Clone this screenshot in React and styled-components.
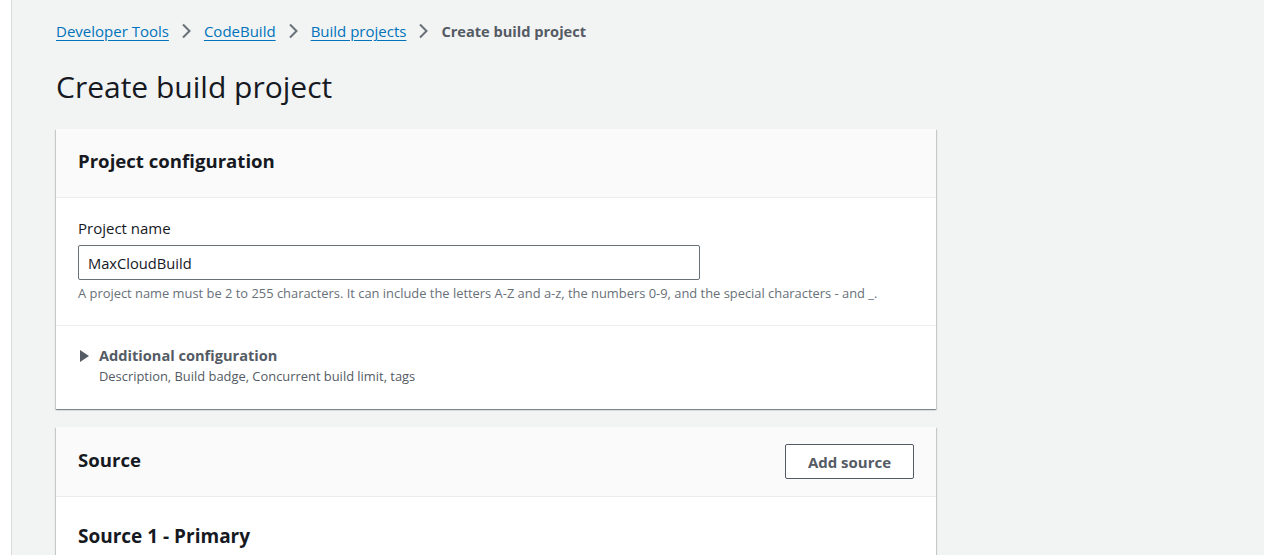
import React from "react"
import styled, { createGlobalStyle } from "styled-components"

const GlobalStyle = createGlobalStyle`
  html, body {
    margin: 0;
    padding: 0;
    background: #f2f3f3;
    font-family: "Open Sans", "Noto Sans", Arial, sans-serif;
    color: #16191f;
  }
`

const Shell = styled.div`
  display: flex;
  min-height: 555px;
`

const NavRail = styled.div`
  width: 11px;
  flex-shrink: 0;
  background: #ffffff;
  border-right: 1px solid #d5dbdb;
`

const Main = styled.main`
  flex: 1;
  padding: 19px 0 0 44px;
  max-width: 880px;
`

const Breadcrumbs = styled.nav`
  display: flex;
  align-items: center;
  height: 24px;
  font-size: 15px;
`

const Crumb = styled.a`
  color: #0073bb;
  text-decoration: underline;
  text-underline-offset: 3px;
  cursor: pointer;
`

const CurrentCrumb = styled.span`
  color: #545b64;
  font-weight: 700;
  font-size: 14.6px;
`

const Chevron = styled.svg`
  width: 10px;
  height: 16px;
  margin: 0 13px 0 12px;
  color: #687078;
`

const Title = styled.h1`
  margin: 24px 0 22px;
  font-size: 30px;
  line-height: 40px;
  font-weight: 400;
  color: #16191f;
`

const Card = styled.section`
  background: #ffffff;
  box-shadow: 0 1px 1px 0 rgba(0, 28, 36, 0.3), 1px 1px 1px 0 rgba(0, 28, 36, 0.15),
    -1px 1px 1px 0 rgba(0, 28, 36, 0.15);
  margin-bottom: 18px;
`

const CardHeader = styled.header`
  box-sizing: border-box;
  display: flex;
  align-items: center;
  justify-content: space-between;
  height: ${({ tall }) => (tall ? "70px" : "69px")};
  padding: 0 22px ${({ tall }) => (tall ? "3px" : "5px")};
  background: #fafafa;
  border-bottom: 1px solid #eaeded;
`

const CardTitle = styled.h2`
  margin: 0;
  font-size: 18.6px;
  line-height: 24px;
  font-weight: 700;
  color: #16191f;
`

const CardBody = styled.div`
  padding: ${({ pad }) => pad || "20px 22px"};
  border-bottom: ${({ divider }) => (divider ? "1px solid #eaeded" : "none")};
`

const Label = styled.label`
  display: block;
  font-size: 15px;
  line-height: 22px;
  color: #16191f;
  margin-bottom: 6px;
`

const TextInput = styled.input`
  display: block;
  box-sizing: border-box;
  width: 622px;
  height: 35px;
  padding: 0 9px;
  border: 1px solid #687078;
  border-radius: 2px;
  font-family: inherit;
  font-size: 14.7px;
  color: #16191f;
  outline: none;
`

const Hint = styled.p`
  margin: 4px 0 0;
  font-size: 12.9px;
  line-height: 18px;
  color: #687078;
`

const Expander = styled.div`
  display: flex;
  align-items: flex-start;
  gap: 10px;
`

const Caret = styled.span`
  width: 0;
  height: 0;
  margin: 6px 0 0 2px;
  border-top: 6px solid transparent;
  border-bottom: 6px solid transparent;
  border-left: 9px solid #545b64;
`

const ExpanderTitle = styled.div`
  font-size: 14.6px;
  line-height: 22px;
  font-weight: 700;
  color: #545b64;
`

const ExpanderDesc = styled.div`
  font-size: 12.9px;
  line-height: 20px;
  color: #545b64;
`

const Button = styled.button`
  width: 129px;
  height: 35px;
  margin-top: 3px;
  background: #ffffff;
  border: 1px solid #545b64;
  border-radius: 2px;
  font-family: inherit;
  font-size: 15px;
  font-weight: 700;
  color: #545b64;
  cursor: pointer;
`

const SubTitle = styled.h3`
  margin: 0;
  font-size: 19px;
  line-height: 24px;
  font-weight: 700;
  color: #16191f;
`

const ChevronIcon = () => (
  <Chevron viewBox="0 0 10 16" fill="none" stroke="currentColor" strokeWidth="2">
    <path d="M2 1.5l6.5 6.5-6.5 6.5" />
  </Chevron>
)

const App = () => (
  <Shell>
    <GlobalStyle />
    <NavRail />
    <Main>
      <Breadcrumbs>
        <Crumb>Developer Tools</Crumb>
        <ChevronIcon />
        <Crumb>CodeBuild</Crumb>
        <ChevronIcon />
        <Crumb>Build projects</Crumb>
        <ChevronIcon />
        <CurrentCrumb>Create build project</CurrentCrumb>
      </Breadcrumbs>
      <Title>Create build project</Title>

      <Card>
        <CardHeader>
          <CardTitle>Project configuration</CardTitle>
        </CardHeader>
        <CardBody divider pad="19px 22px 23px">
          <Label htmlFor="projectName">Project name</Label>
          <TextInput id="projectName" defaultValue="MaxCloudBuild" />
          <Hint>
            A project name must be 2 to 255 characters. It can include the letters A-Z and a-z, the
            numbers 0-9, and the special characters - and _.
          </Hint>
        </CardBody>
        <CardBody pad="18px 22px 23px">
          <Expander>
            <Caret />
            <div>
              <ExpanderTitle>Additional configuration</ExpanderTitle>
              <ExpanderDesc>Description, Build badge, Concurrent build limit, tags</ExpanderDesc>
            </div>
          </Expander>
        </CardBody>
      </Card>

      <Card>
        <CardHeader tall>
          <CardTitle>Source</CardTitle>
          <Button>Add source</Button>
        </CardHeader>
        <CardBody pad="27px 22px 40px">
          <SubTitle>Source 1 - Primary</SubTitle>
        </CardBody>
      </Card>
    </Main>
  </Shell>
)

export default App
